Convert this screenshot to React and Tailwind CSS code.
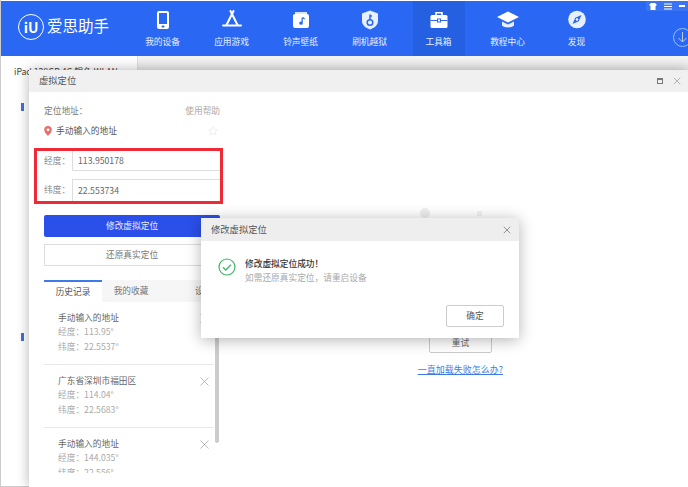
import { Star, X } from 'lucide-react';

const font = { fontFamily: '"Noto Sans CJK SC", "Liberation Sans", sans-serif' };

const PhoneIcon = () => (
  <svg width="24" height="24" viewBox="0 0 24 24">
    <rect x="6" y="3" width="12" height="18" rx="2" fill="#fff" />
    <rect x="8" y="5" width="8" height="11" fill="#2a68f4" />
    <rect x="10.500" y="17.500" width="3" height="2" rx="1" fill="#2a68f4" />
  </svg>
);

const AppIcon = () => (
  <svg width="24" height="24" viewBox="0 0 24 24" fill="none" stroke="#fff" strokeWidth="2" strokeLinecap="round">
    <path d="M13.500 3 6.500 17" />
    <path d="M10.500 3 17.500 17" />
    <path d="M3 17.500h18" />
  </svg>
);

const MusicIcon = () => (
  <svg width="24" height="24" viewBox="0 0 24 24">
    <path d="M6 4h12v2H6z" fill="#dbe6fd" />
    <rect x="4" y="6" width="16" height="14" rx="2" fill="#fff" />
    <path d="M13.800 9v6.200a1.800 1.600 0 1 1-1.300-1.500V10.200z" fill="#2a68f4" />
    <path d="M13.500 9l2.200 1v1.400l-2.200-1z" fill="#2a68f4" />
  </svg>
);

const ShieldIcon = () => (
  <svg width="24" height="24" viewBox="0 0 24 24">
    <path d="M12 2.500 20 5.500v7.500c0 4-3.500 7-8 8.500-4.500-1.500-8-4.500-8-8.500V5.500z" fill="#e8f0fe" />
    <circle cx="12" cy="14.500" r="2.800" fill="none" stroke="#2a68f4" strokeWidth="1.500" />
    <path d="M12 11.500V6.500M12 8h2" stroke="#2a68f4" strokeWidth="1.500" fill="none" />
  </svg>
);

const ToolboxIcon = () => (
  <svg width="24" height="24" viewBox="0 0 24 24">
    <path d="M9 7V4.800h6V7" fill="none" stroke="#fff" strokeWidth="1.600" />
    <rect x="3.500" y="7" width="17" height="13" rx="1.500" fill="#fff" />
    <path d="M3.500 12.500h17" stroke="#2a68f4" strokeWidth="1" />
    <rect x="10.500" y="11" width="3" height="3" fill="#fff" stroke="#2a68f4" strokeWidth="1" />
  </svg>
);

const HatIcon = () => (
  <svg width="24" height="24" viewBox="0 0 24 24">
    <path d="M12 3.500 23 9l-11 5.500L1 9z" fill="#fff" />
    <path d="M6 13.500v4c2 2.500 10 2.500 12 0v-4l-6 3z" fill="#e8f0fe" />
  </svg>
);

const CompassIcon = () => (
  <svg width="24" height="24" viewBox="0 0 24 24">
    <circle cx="12" cy="11.500" r="8.800" fill="#e8f0fe" />
    <path d="M16.500 7 13.800 13.300 7.500 16l2.700-6.300z" fill="#2a68f4" />
    <circle cx="12" cy="11.500" r="1.200" fill="#fff" />
  </svg>
);

const navItems = [
  { label: '我的设备', icon: <PhoneIcon /> },
  { label: '应用游戏', icon: <AppIcon /> },
  { label: '铃声壁纸', icon: <MusicIcon /> },
  { label: '刷机越狱', icon: <ShieldIcon /> },
  { label: '工具箱', icon: <ToolboxIcon />, active: true },
  { label: '教程中心', icon: <HatIcon /> },
  { label: '发现', icon: <CompassIcon /> },
];

const history = [
  { name: '手动输入的地址', lng: '113.95°', lat: '22.5537°' },
  { name: '广东省深圳市福田区', lng: '114.04°', lat: '22.5683°' },
  { name: '手动输入的地址', lng: '144.035°', lat: '22.556°' },
];

function TopBar() {
  return (
    <header className="relative flex h-[55px] shrink-0 bg-[#2a68f4]">
      <div className="flex w-[127px] shrink-0 items-start pl-[17px] pt-[13px] text-white">
        <div className="flex h-[26px] w-[26px] items-center justify-center rounded-full border-[1.500px] border-white text-[14px] font-bold leading-none">
          iU
        </div>
        <span className="ml-[3px] mt-[1px] whitespace-nowrap text-[15.500px] leading-[20px]">爱思助手</span>
      </div>
      {navItems.map((item) => (
        <div key={item.label} className="flex w-[69px] shrink-0 justify-center">
          <div className={`flex w-[52px] flex-col items-center pt-[7px] ${item.active ? 'bg-[#2560e2]' : ''}`}>
            {item.icon}
            <span className="mt-[4px] whitespace-nowrap text-[8.700px] leading-[12px] text-[#e6eefe]">{item.label}</span>
          </div>
        </div>
      ))}
      <div className="absolute right-0 top-0 flex h-[10px] w-[42px] items-center justify-around bg-[#3a74f5] text-white">
        <svg width="8" height="7" viewBox="0 0 8 7" fill="#fff"><path d="M2 0h4l2 2-1.500 1V7h-5V3L0 2z" /></svg>
        <svg width="8" height="7" viewBox="0 0 8 7" stroke="#fff" strokeWidth="1"><path d="M0 1h8M0 3.500h8M0 6h8" /></svg>
        <div className="h-[2px] w-[6px] bg-white" />
      </div>
      <div className="absolute left-[672px] top-[27px] flex h-[19px] w-[19px] items-center justify-center rounded-full border border-[#9dbcfa]">
        <svg width="11" height="11" viewBox="0 0 11 11" fill="none" stroke="#b5ccfb" strokeWidth="1"><path d="M5.500 0v10M1.500 6l4 4 4-4" /></svg>
      </div>
    </header>
  );
}

function LeftPanel() {
  return (
    <div className="ml-[15px] w-[176px] shrink-0">
      <div className="flex h-[26px] items-end justify-between text-[8.700px] leading-[14px]">
        <span className="text-[#777]">定位地址：</span>
        <span className="text-[#aaa]">使用帮助</span>
      </div>
      <div className="mt-[6px] flex h-[14px] items-center justify-between text-[8.700px] text-[#555]">
        <div className="flex items-center">
          <svg width="8" height="10" viewBox="0 0 8 10" className="mr-[4px]">
            <path d="M4 0a3.800 3.800 0 0 1 3.800 3.800C7.800 6.500 4 10 4 10S.2 6.500.2 3.800A3.800 3.800 0 0 1 4 0z" fill="#e8706a" />
            <circle cx="4" cy="3.800" r="1.400" fill="#fff" />
          </svg>
          手动输入的地址
        </div>
        <Star size={10} strokeWidth={1.500} className="mr-[2px] text-[#e4e4e4]" />
      </div>
      <div className="-ml-[10px] -mr-[3px] mt-[10px] flex flex-col border-[3px] border-[#ee2a36] pl-[7px] text-[8.700px]">
        <div className="flex h-[20px]">
          <span className="w-[28px] shrink-0 self-center text-[#888]">经度：</span>
          <div className="flex flex-1 items-center border-b border-l border-[#ddd] pl-[5px] text-[#666]">113.950178</div>
        </div>
        <div className="mt-[8px] flex h-[22px]">
          <span className="w-[28px] shrink-0 self-center text-[#888]">纬度：</span>
          <div className="flex flex-1 items-center border-l border-t border-[#ddd] pl-[5px] text-[#666]">22.553734</div>
        </div>
      </div>
      <button className="mt-[11px] flex h-[22px] w-full items-center justify-center rounded-[2px] bg-[#2b50ea] text-[8.700px] text-[#e8ecfd]">
        修改虚拟定位
      </button>
      <button className="mt-[7px] flex h-[22px] w-full items-center justify-center border border-[#ddd] bg-white text-[8.700px] text-[#777]">
        还原真实定位
      </button>
      <div className="mt-[14px] flex h-[22px] bg-[#f6f6f6] text-[8.700px]">
        <div className="flex w-[58px] items-center justify-center border-t-2 border-[#3f7be8] bg-white text-[#555]">历史记录</div>
        <div className="flex w-[58px] items-center justify-center text-[#777]">我的收藏</div>
        <div className="flex flex-1 items-center pl-[35px] text-[#777]">设置</div>
      </div>
      <div className="flex">
        <div className="h-[171px] w-[170px] shrink-0 overflow-hidden">
          {history.map((h) => (
            <div key={h.lat} className="relative h-[63px] border-b border-[#e8e8e8] pl-[14px] pt-[9px] text-[8.700px] leading-[14.300px]">
              <div className="text-[#666]">{h.name}</div>
              <div className="text-[#aaa]">经度：{h.lng}</div>
              <div className="text-[#aaa]">纬度：{h.lat}</div>
              <X className="absolute right-[2.500px] top-[8.500px] text-[#777]" size={15} strokeWidth={0.800} />
            </div>
          ))}
        </div>
        <div className="ml-[1px] h-[141px] w-[4px] rounded-b-[2px] bg-[#ccc]" />
      </div>
    </div>
  );
}

function VirtualLocationWindow() {
  return (
    <section className="absolute left-[29px] top-[70px] flex h-[417px] w-[659px] flex-col bg-white shadow-[0_0_12px_rgba(0,0,0,0.3)]">
      <div className="flex h-[22px] shrink-0 items-center justify-between bg-[#f0f0f0] pl-[10px] pr-[5px] text-[9.300px] text-[#555]">
        <span>虚拟定位</span>
        <div className="flex items-center gap-[8px]">
          <div className="h-[6px] w-[6px] border border-t-2 border-[#777]" />
          <X size={12} strokeWidth={1.200} className="text-[#888]" />
        </div>
      </div>
      <div className="flex flex-1">
        <LeftPanel />
        <div className="flex flex-1 flex-col items-end pr-[185px]">
          <div className="ml-[200px] mt-[116px] flex items-center gap-[47px] self-start">
            <div className="h-[10px] w-[10px] rounded-full bg-[#eeeeee]" />
            <div className="h-[5px] w-[5px] bg-[#f2f2f2]" />
          </div>
          <div className="mr-[11px] mt-[115px] flex h-[20px] w-[63px] items-center justify-center rounded-[2px] border border-[#ccc] text-[8.700px] text-[#666]">
            重试
          </div>
          <span className="mt-[10px] text-[9px] text-[#3f7be8] underline">一直加载失败怎么办?</span>
        </div>
      </div>
    </section>
  );
}

function SuccessDialog() {
  return (
    <section className="absolute left-[201px] top-[218px] h-[120px] w-[318px] bg-white shadow-[0_2px_14px_rgba(0,0,0,0.3)]">
      <div className="flex h-[23px] items-center justify-between bg-[#eeeeee] pl-[10px] pr-[6px] text-[9.300px] text-[#555]">
        <span>修改虚拟定位</span>
        <X size={12} strokeWidth={1.800} className="text-[#888]" />
      </div>
      <div className="flex pl-[17px] pt-[16px]">
        <svg width="18" height="18" viewBox="0 0 18 18" fill="none" stroke="#3db56a" className="mt-[1px]">
          <circle cx="9" cy="9" r="8" strokeWidth="1.200" />
          <path d="M5 9.200l2.800 2.800L13 6.800" strokeWidth="1.300" />
        </svg>
        <div className="ml-[9px] text-[8.700px] leading-[14px]">
          <div className="font-medium text-[#333]">修改虚拟定位成功！</div>
          <div className="text-[#aaa]">如需还原真实定位，请重启设备</div>
        </div>
      </div>
      <div className="flex justify-end pr-[15px] pt-[20px]">
        <button className="flex h-[22px] w-[58px] items-center justify-center rounded-[2px] border border-[#ccc] text-[8.700px] text-[#555]">
          确定
        </button>
      </div>
    </section>
  );
}

export default function App() {
  return (
    <div className="relative flex h-[487px] w-[688px] flex-col overflow-hidden bg-white pl-[1px] pt-[1px] shadow-[inset_1px_0_0_#ccc,inset_0_-1px_0_#ccc]" style={font}>
      <TopBar />
      <div className="flex flex-1">
        <aside className="w-[137px] shrink-0 border-r border-[#ddd] pl-[13px] pt-[9px]">
          <div className="whitespace-nowrap text-[8.700px] leading-[14px] text-[#444]">iPad 128GB 4G 银色 WLAN</div>
          <div className="ml-[7px] mt-[24px] h-[8px] w-[3px] bg-[#3f6fd8]" />
          <div className="ml-[7px] mt-[222px] h-[8px] w-[3px] bg-[#3f6fd8]" />
        </aside>
        <div className="h-[14px] flex-1 bg-gradient-to-b from-[#f6f6f6] to-[#e8e8e8]" />
      </div>
      <VirtualLocationWindow />
      <SuccessDialog />
    </div>
  );
}
